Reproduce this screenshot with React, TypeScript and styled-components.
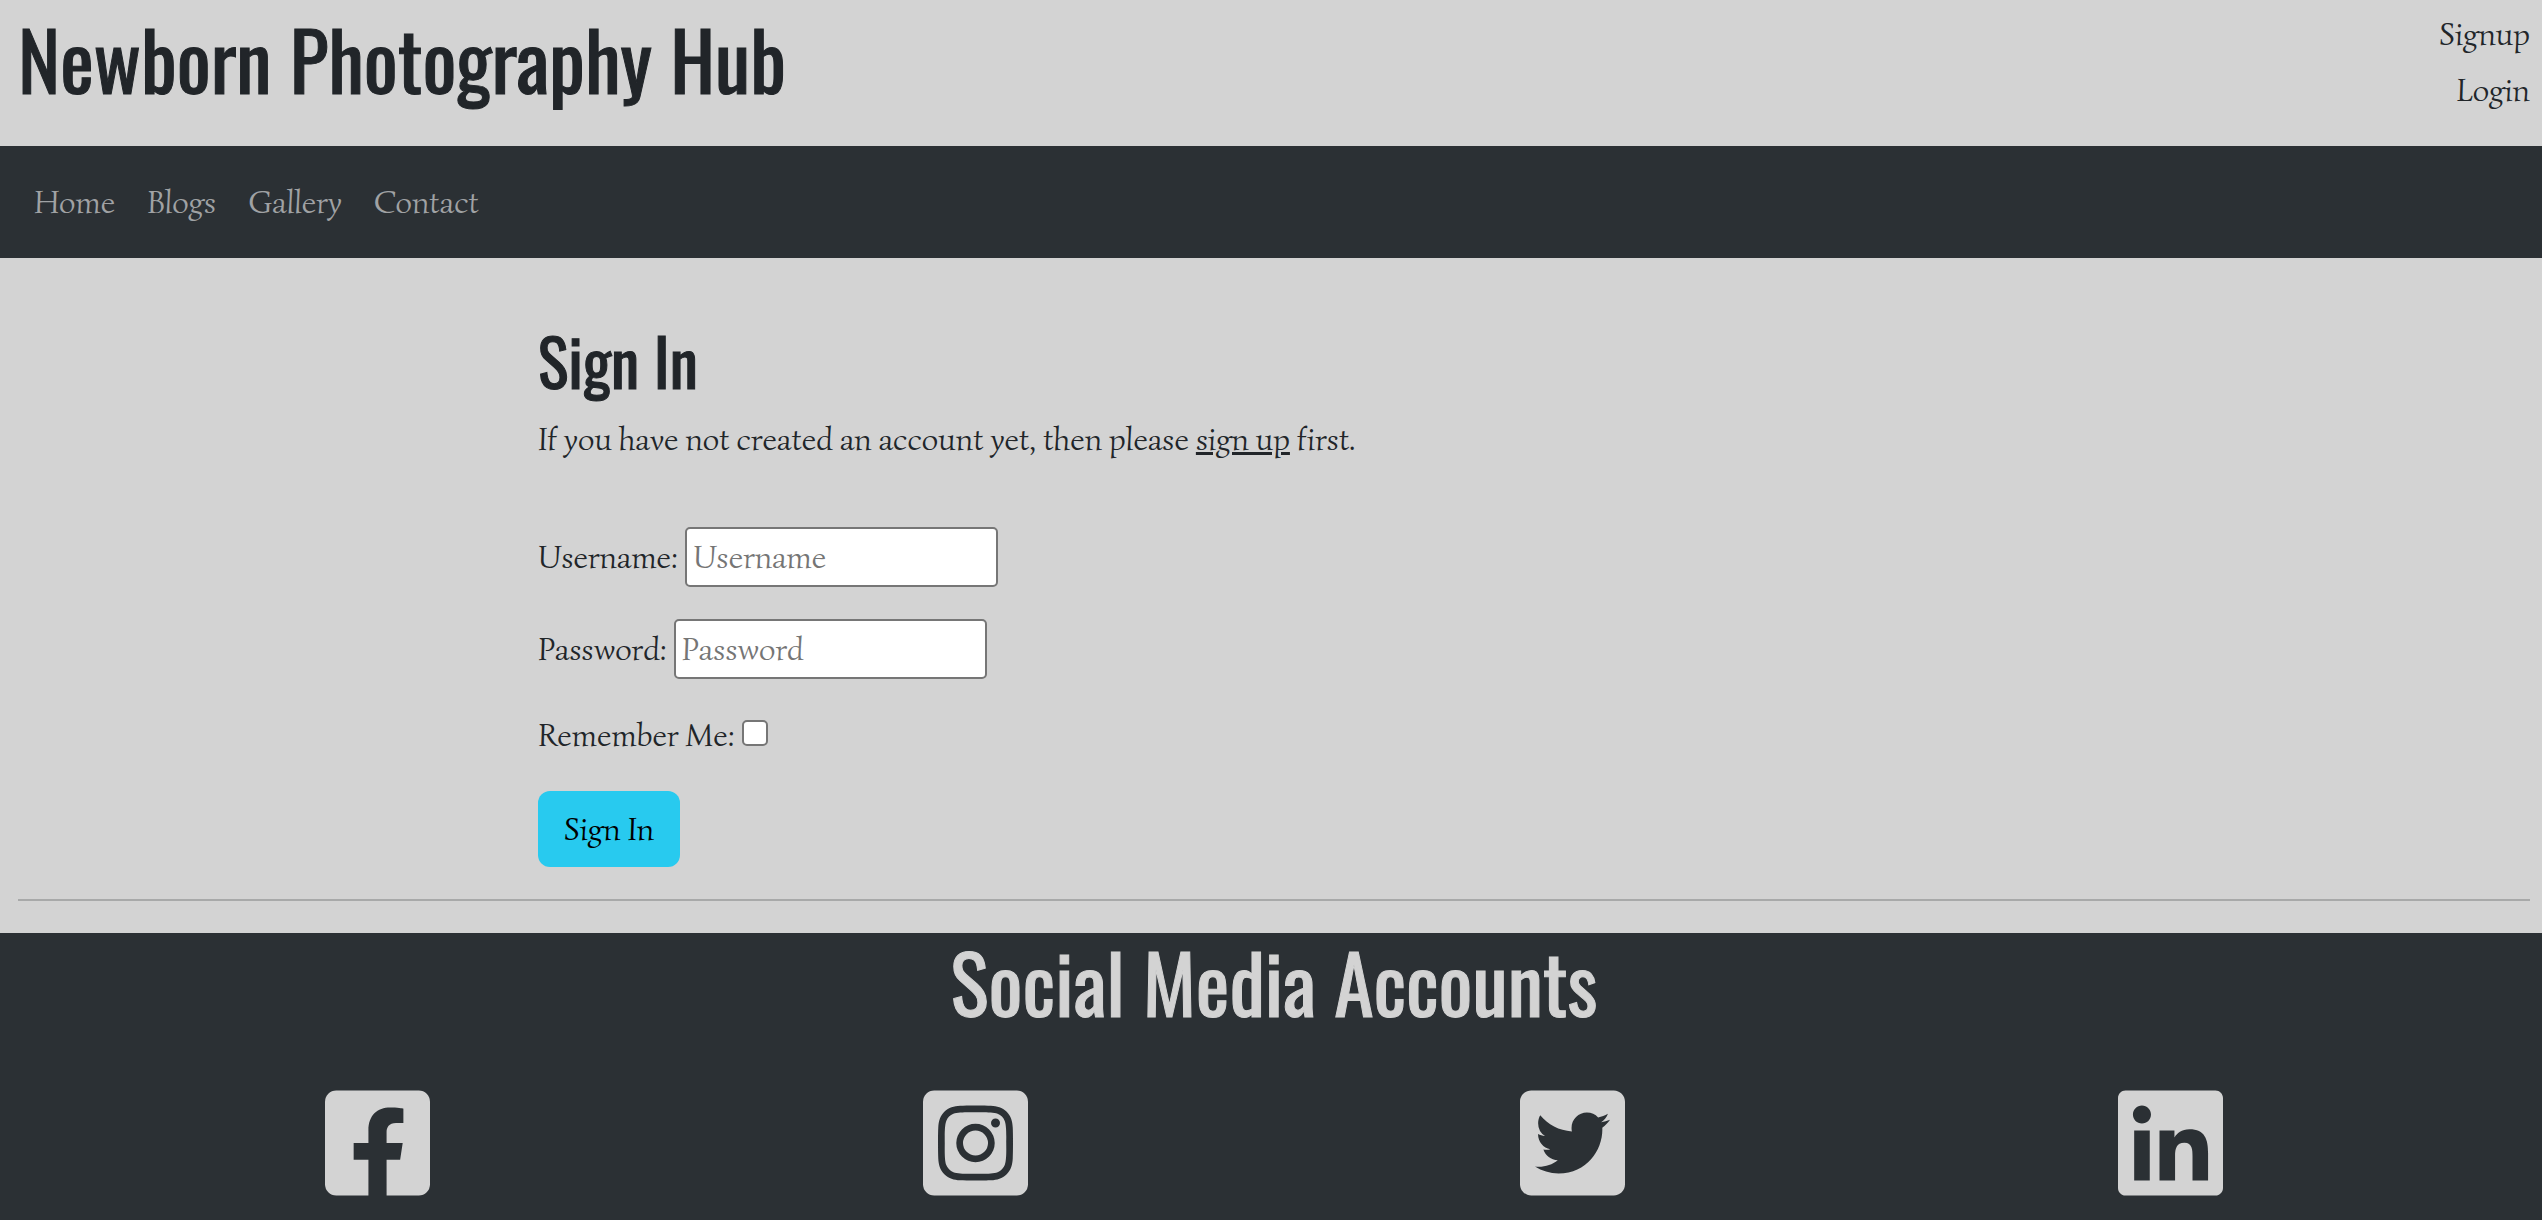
import React from "react";
import styled, { createGlobalStyle } from "styled-components";
import {
  FaFacebookSquare,
  FaInstagramSquare,
  FaTwitterSquare,
  FaLinkedin,
} from "react-icons/fa";

const ink = "#212529";
const dark = "#2b3034";
const light = "#d3d3d3";
const displayFont = `"Oswald", "Liberation Sans Narrow", "Arial Narrow", sans-serif`;
const bodyFont = `"Simonetta", "Alegreya", "Liberation Serif", serif`;

const GlobalStyle = createGlobalStyle`
  *, *::before, *::after { box-sizing: border-box; }
  body {
    margin: 0;
    background: ${dark};
    color: ${ink};
    font-family: ${bodyFont};
    font-size: 32px;
    line-height: 48px;
  }
  a { color: inherit; }
`;

const Page = styled.div`
  background: ${light};
`;

const Header = styled.header`
  display: flex;
  justify-content: space-between;
  align-items: flex-start;
  padding: 10px 12px 32px 18px;
`;

const Title = styled.h1`
  margin: 0;
  font-family: ${displayFont};
  font-size: 80px;
  font-weight: 400;
  line-height: 96px;
  -webkit-text-stroke: 1px currentColor;
`;

const AccountLinks = styled.ul`
  display: flex;
  flex-direction: column;
  align-items: flex-end;
  gap: 8px;
  margin: 0;
  padding: 0;
  list-style: none;
`;

const PlainLink = styled.a`
  text-decoration: none;
`;

const NavBar = styled.nav`
  padding: 32px 18px;
  background: ${dark};
`;

const NavList = styled.ul`
  display: flex;
  margin: 0;
  padding: 0;
  list-style: none;
`;

const NavLink = styled.a`
  display: block;
  padding: 0 16px;
  color: #a0a2a4;
  text-decoration: none;
`;

const Main = styled.main`
  padding: 62px 12px 0 18px;
`;

const Panel = styled.section`
  margin: 0 20.7%;
`;

const Heading = styled.h2`
  margin: 0 0 15px;
  font-family: ${displayFont};
  font-size: 64px;
  font-weight: 400;
  line-height: 80px;
  -webkit-text-stroke: 1px currentColor;
`;

const Intro = styled.p`
  margin: 0 0 64px;
`;

const Form = styled.form`
  display: flex;
  flex-direction: column;
  align-items: flex-start;
  gap: 32px;
`;

const Field = styled.div`
  display: flex;
  align-items: center;
  gap: 7px;
`;

const TextInput = styled.input`
  width: 313px;
  height: 60px;
  padding: 0 6px;
  border: 2px solid #767676;
  border-radius: 5px;
  background: #fff;
  color: ${ink};
  font: inherit;

  &::placeholder {
    color: #757575;
    opacity: 1;
  }
`;

const Checkbox = styled.input`
  appearance: none;
  width: 26px;
  height: 26px;
  margin: 0 0 4px;
  border: 2px solid #767676;
  border-radius: 5px;
  background: #fff;

  &:checked {
    background: #0d6efd;
  }
`;

const SubmitButton = styled.button`
  padding: 14px 26px;
  border: 0;
  border-radius: 12px;
  background: #28caef;
  color: #000;
  font: inherit;
`;

const Divider = styled.hr`
  margin: 32px 0;
  border: 0;
  border-top: 2px solid #a8a9a9;
`;

const Footer = styled.footer`
  padding: 0 12px 24px 18px;
  background: ${dark};
  color: ${light};
  text-align: center;
`;

const SocialList = styled.ul`
  display: grid;
  grid-template-columns: repeat(4, 1fr);
  margin: 0;
  padding: 54px 61px 0;
  list-style: none;
`;

const SocialLink = styled.a`
  display: inline-flex;

  svg {
    width: 105px;
    height: 120px;
  }
`;

const navItems = ["Home", "Blogs", "Gallery", "Contact"];

const socials = [
  { name: "Facebook", Icon: FaFacebookSquare },
  { name: "Instagram", Icon: FaInstagramSquare },
  { name: "Twitter", Icon: FaTwitterSquare },
  { name: "LinkedIn", Icon: FaLinkedin },
];

export default function App() {
  return (
    <>
      <GlobalStyle />
      <Page>
        <Header>
          <Title>Newborn Photography Hub</Title>
          <AccountLinks>
            <li>
              <PlainLink href="#signup">Signup</PlainLink>
            </li>
            <li>
              <PlainLink href="#login">Login</PlainLink>
            </li>
          </AccountLinks>
        </Header>
        <NavBar>
          <NavList>
            {navItems.map((item) => (
              <li key={item}>
                <NavLink href={`#${item.toLowerCase()}`}>{item}</NavLink>
              </li>
            ))}
          </NavList>
        </NavBar>
        <Main>
          <Panel>
            <Heading>Sign In</Heading>
            <Intro>
              If you have not created an account yet, then please{" "}
              <a href="#signup">sign up</a> first.
            </Intro>
            <Form onSubmit={(event) => event.preventDefault()}>
              <Field>
                <label htmlFor="username">Username:</label>
                <TextInput id="username" type="text" placeholder="Username" />
              </Field>
              <Field>
                <label htmlFor="password">Password:</label>
                <TextInput id="password" type="password" placeholder="Password" />
              </Field>
              <Field>
                <label htmlFor="remember">Remember Me:</label>
                <Checkbox id="remember" type="checkbox" />
              </Field>
              <SubmitButton type="submit">Sign In</SubmitButton>
            </Form>
          </Panel>
          <Divider />
        </Main>
        <Footer>
          <Title as="h2">Social Media Accounts</Title>
          <SocialList>
            {socials.map(({ name, Icon }) => (
              <li key={name}>
                <SocialLink href={`#${name.toLowerCase()}`} aria-label={name}>
                  <Icon />
                </SocialLink>
              </li>
            ))}
          </SocialList>
        </Footer>
      </Page>
    </>
  );
}
